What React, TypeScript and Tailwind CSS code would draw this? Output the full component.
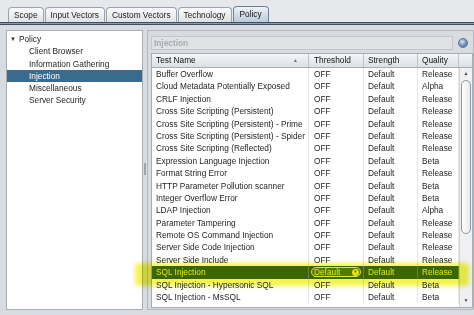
import React from 'react';

type Row = [string, string, string, string];

const rows: Row[] = [
  ['Buffer Overflow', 'OFF', 'Default', 'Release'],
  ['Cloud Metadata Potentially Exposed', 'OFF', 'Default', 'Alpha'],
  ['CRLF Injection', 'OFF', 'Default', 'Release'],
  ['Cross Site Scripting (Persistent)', 'OFF', 'Default', 'Release'],
  ['Cross Site Scripting (Persistent) - Prime', 'OFF', 'Default', 'Release'],
  ['Cross Site Scripting (Persistent) - Spider', 'OFF', 'Default', 'Release'],
  ['Cross Site Scripting (Reflected)', 'OFF', 'Default', 'Release'],
  ['Expression Language Injection', 'OFF', 'Default', 'Beta'],
  ['Format String Error', 'OFF', 'Default', 'Release'],
  ['HTTP Parameter Pollution scanner', 'OFF', 'Default', 'Beta'],
  ['Integer Overflow Error', 'OFF', 'Default', 'Beta'],
  ['LDAP Injection', 'OFF', 'Default', 'Alpha'],
  ['Parameter Tampering', 'OFF', 'Default', 'Release'],
  ['Remote OS Command Injection', 'OFF', 'Default', 'Release'],
  ['Server Side Code Injection', 'OFF', 'Default', 'Release'],
  ['Server Side Include', 'OFF', 'Default', 'Release'],
  ['SQL Injection', 'Default', 'Default', 'Release'],
  ['SQL Injection - Hypersonic SQL', 'OFF', 'Default', 'Beta'],
  ['SQL Injection - MsSQL', 'OFF', 'Default', 'Beta'],
];

const tabs = ['Scope', 'Input Vectors', 'Custom Vectors', 'Technology', 'Policy'];

const tree = ['Client Browser', 'Information Gathering', 'Injection', 'Miscellaneous', 'Server Security'];

function Tab({ label, active }: { label: string; active: boolean }) {
  return (
    <div
      className={
        active
          ? 'h-[16px] px-[6px] flex items-center border border-b-0 border-[#6f8196] rounded-t-[4px] bg-gradient-to-b from-[#eef3f8] to-[#b9cbdd] text-[#111]'
          : 'h-[15px] px-[5px] flex items-center border border-b-0 border-[#9aa3ad] rounded-t-[4px] bg-gradient-to-b from-[#fbfbfc] to-[#dfe2e6] text-[#1c1c1c]'
      }
    >
      {label}
    </div>
  );
}

export default function App() {
  return (
    <div className="relative w-[474px] h-[315px] overflow-hidden bg-[#d8dbe0] font-['Liberation_Sans',Arial,sans-serif] text-[8.3px] text-[#1e1e1e]">
      {/* tabs */}
      <div className="h-[22px] bg-[#e6e8eb] flex items-end pl-[8px] gap-[1px]">
        {tabs.map((t) => (
          <Tab key={t} label={t} active={t === 'Policy'} />
        ))}
      </div>
      <div className="h-[3px] border-t border-b border-[#3f4d60] bg-[#8d9cb0]" />

      <div className="flex h-[290px] pt-[5px]">
        {/* tree */}
        <div className="ml-[6px] w-[137px] h-[280px] bg-white border border-[#a9aeb5] pt-[2px]">
          <div className="h-[12.3px] flex items-center pl-[3px]">
            <span className="text-[6px] text-[#333] mr-[3px]">▼</span>
            Policy
          </div>
          {tree.map((t) => (
            <div
              key={t}
              className={
                t === 'Injection'
                  ? 'h-[12.3px] flex items-center pl-[22px] bg-[#3a6a8c] text-white'
                  : 'h-[12.3px] flex items-center pl-[22px]'
              }
            >
              {t}
            </div>
          ))}
        </div>

        {/* splitter */}
        <div className="w-[4px] flex items-start justify-center pt-[133px]">
          <div className="w-[2px] h-[12px] border-l border-r border-[#a0a5ac]" />
        </div>

        {/* right panel */}
        <div className="w-[327px] h-[280px] border border-[#b3b8bf] pl-[3px] pr-[1px] pt-[5px]">
          <div className="flex items-center h-[14px]">
            <div className="w-[302px] h-[14px] border border-[#c3c7cc] bg-[#dfe1e4] flex items-center pl-[2px] font-bold text-[#a7abb1]">
              Injection
            </div>
            <div className="ml-[5px] w-[10px] h-[10px] rounded-full border border-[#5c7796] bg-[radial-gradient(circle_at_40%_35%,#dfe9f5_0%,#7d9cc4_45%,#3f6290_100%)]" />
          </div>

          {/* table */}
          <div className="mt-[3px] w-[322px] h-[255px] border border-[#a5adb7] bg-white flex flex-col">
            <div className="h-[14px] flex bg-gradient-to-b from-[#f4f6f8] to-[#dbe0e6] border-b border-[#a5adb7] text-[#111]">
              <div className="w-[157px] flex items-center justify-between pl-[4px] pr-[10px] border-r border-[#bcc3cb]">
                <span>Test Name</span>
                <span className="text-[5px] text-[#5a7191]">▲</span>
              </div>
              <div className="w-[55px] flex items-center pl-[5px] border-r border-[#bcc3cb]">Threshold</div>
              <div className="w-[54px] flex items-center pl-[4px] border-r border-[#bcc3cb]">Strength</div>
              <div className="w-[41px] flex items-center pl-[4px] border-r border-[#bcc3cb]">Quality</div>
              <div className="flex-1" />
            </div>

            <div className="flex flex-1">
              <div className="w-[307px]">
                {rows.map((r) => {
                  const sel = r[0] === 'SQL Injection';
                  return (
                    <div
                      key={r[0]}
                      className={
                        sel
                          ? 'h-[12.4px] flex bg-[#3e6a06] text-[#e2f25a]'
                          : 'h-[12.4px] flex'
                      }
                    >
                      <div className={sel ? 'w-[157px] flex items-center pl-[4px] border-r border-[#6d8d34]' : 'w-[157px] flex items-center pl-[4px] border-r border-[#e4e6e8]'}>
                        {r[0]}
                      </div>
                      <div className={sel ? 'w-[55px] flex items-center pl-[2px] border-r border-[#6d8d34]' : 'w-[55px] flex items-center pl-[5px] border-r border-[#e4e6e8]'}>
                        {sel ? (
                          <div className="w-[50px] h-[10px] rounded-[5px] border border-[#eef23c] bg-[#5b7c0e] flex items-center justify-between pl-[2px] pr-[1px]">
                            <span className="underline">Default</span>
                            <span className="w-[7px] h-[7px] rounded-full bg-[#e8ee56] text-[#3e6a06] text-[4px] flex items-center justify-center">▼</span>
                          </div>
                        ) : (
                          r[1]
                        )}
                      </div>
                      <div className={sel ? 'w-[54px] flex items-center pl-[4px] border-r border-[#6d8d34]' : 'w-[54px] flex items-center pl-[4px] border-r border-[#e4e6e8]'}>
                        {r[2]}
                      </div>
                      <div className={sel ? 'w-[41px] flex items-center pl-[4px] border-r border-[#6d8d34]' : 'w-[41px] flex items-center pl-[4px] border-r border-[#e4e6e8]'}>
                        {r[3]}
                      </div>
                    </div>
                  );
                })}
              </div>

              {/* scrollbar */}
              <div className="flex-1 bg-[#eef0f2] flex flex-col items-center border-l border-[#d0d4d9]">
                <div className="h-[12px] flex items-center justify-center text-[5px] text-[#444]">▲</div>
                <div className="w-[10px] h-[154px] rounded-[5px] border border-[#8e99a6] bg-gradient-to-r from-[#ffffff] to-[#e6eaef]" />
                <div className="flex-1" />
                <div className="h-[12px] flex items-center justify-center text-[5px] text-[#444]">▼</div>
              </div>
            </div>
          </div>
        </div>
      </div>

      {/* highlighter annotation */}
      <div className="pointer-events-none absolute left-[135px] top-[263px] w-[334px] h-[23px] rounded-[4px] bg-[#f3f338] opacity-90 blur-[2px] mix-blend-multiply" />
    </div>
  );
}
